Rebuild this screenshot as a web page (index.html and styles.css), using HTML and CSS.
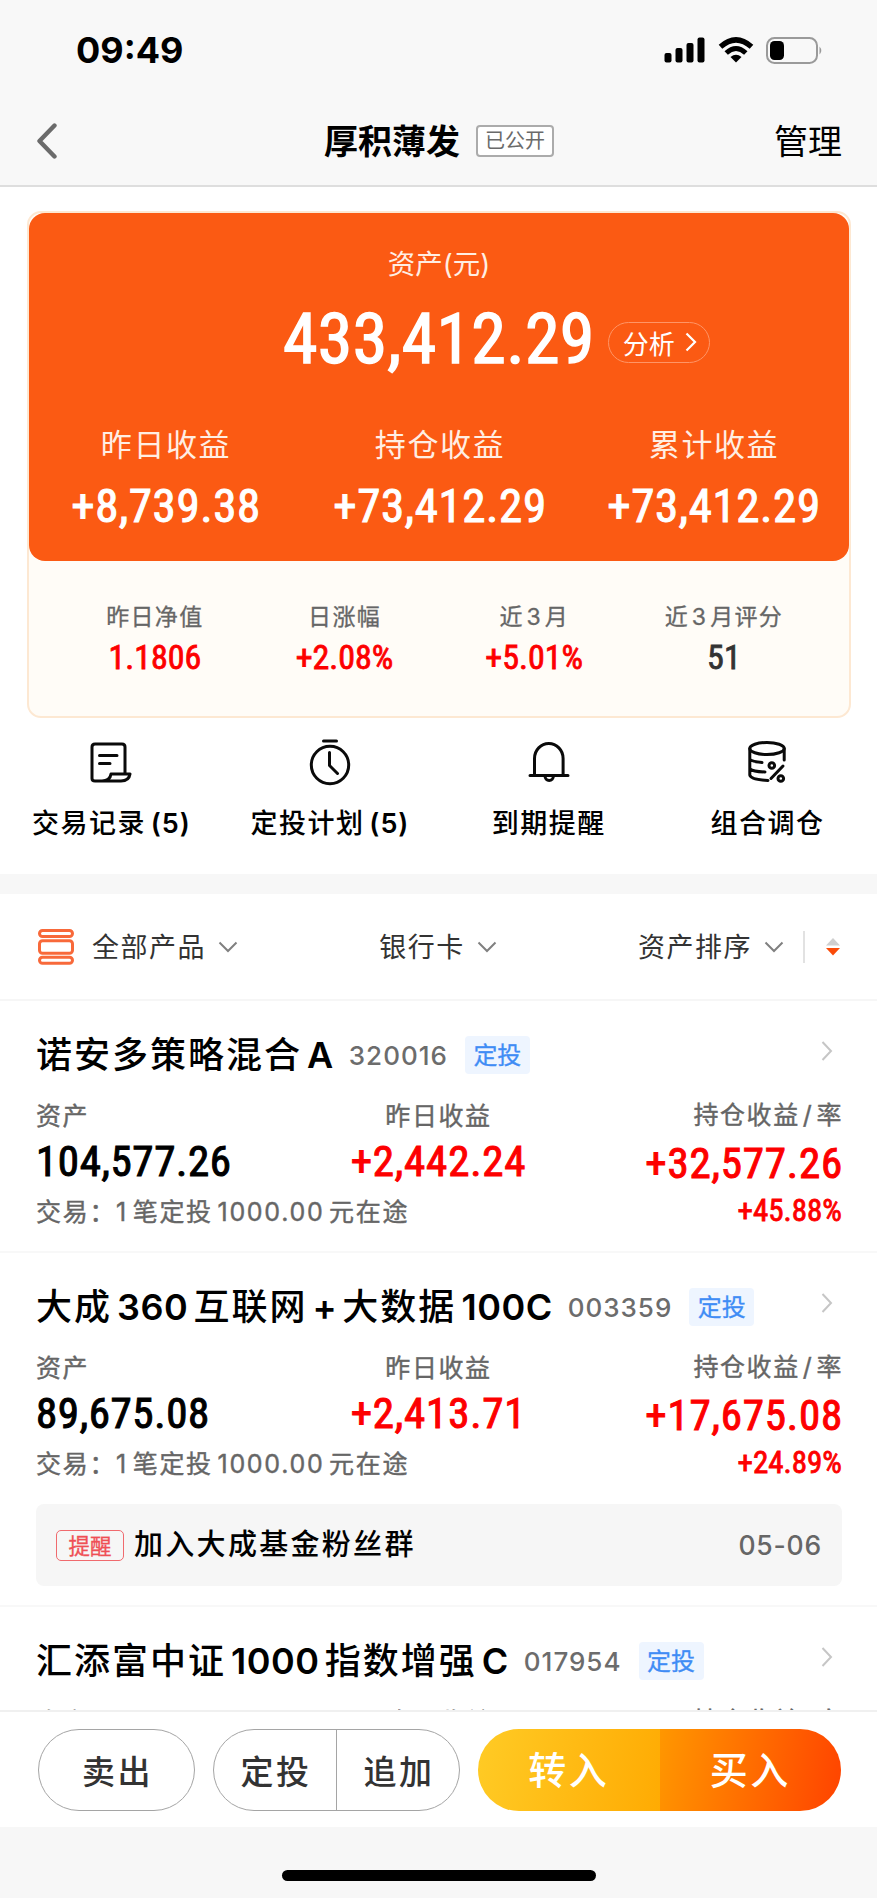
FILE: index.html
```html
<!DOCTYPE html>
<html lang="zh-CN">

<head>
    <meta charset="UTF-8">
    <meta name="viewport" content="width=device-width, initial-scale=1.0">
    <title>厚积薄发</title>
    <link rel="stylesheet" href="styles.css">
</head>

<body>
    <div class="app">
        <!-- Status bar -->
        <div class="status">
            <span class="time">09:49</span>
            <div class="status-icons">
                <svg width="42" height="26" viewBox="0 0 42 26">
                    <rect x="0.5" y="16" width="7" height="9.5" rx="2" />
                    <rect x="11.5" y="11" width="7" height="14.5" rx="2" />
                    <rect x="22.5" y="6" width="7" height="19.5" rx="2" />
                    <rect x="33.5" y="0.5" width="7" height="25" rx="2" />
                </svg>
                <svg width="36" height="26" viewBox="0 0 36 26">
                    <path d="M2.5 9.8 Q18 -4 33.5 9.8" fill="none" stroke="#000" stroke-width="5.4" />
                    <path d="M8.2 16 Q18 7 27.8 16" fill="none" stroke="#000" stroke-width="5" />
                    <path d="M18 25.5 L12.5 20 Q18 15.5 23.5 20 Z" />
                </svg>
                <svg width="57" height="27" viewBox="0 0 57 27">
                    <rect x="1" y="1" width="50" height="25" rx="7.5" fill="none" stroke="#9a9a9a" stroke-width="2" />
                    <rect x="4" y="4" width="14" height="19" rx="4.5" />
                    <path d="M53.5 9.5 Q57 13.5 53.5 17.5 Z" fill="#9a9a9a" />
                </svg>
            </div>
        </div>

        <!-- Nav bar -->
        <div class="nav">
            <svg class="back" width="22" height="36" viewBox="0 0 22 36">
                <path d="M18.5 2.5 L3.5 18 L18.5 33.5" fill="none" stroke="#6b6b6b" stroke-width="4.4" stroke-linecap="round" stroke-linejoin="round" />
            </svg>
            <div class="nav-title">
                <h1>厚积薄发</h1>
                <span class="public">已公开</span>
            </div>
            <span class="manage">管理</span>
        </div>

        <!-- Asset card -->
        <div class="card">
            <div class="asset">
                <div class="asset-label">资产(元)</div>
                <div class="asset-total">
                    <span class="num total">433,412.29</span>
                    <span class="analyse">分析
                        <svg width="12" height="20" viewBox="0 0 12 20">
                            <path d="M1.5 1.5 L10 10 L1.5 18.5" fill="none" stroke="#fff" stroke-width="2.2" />
                        </svg>
                    </span>
                </div>
                <div class="income">
                    <div>
                        <p>昨日收益</p>
                        <span class="num">+8,739.38</span>
                    </div>
                    <div>
                        <p>持仓收益</p>
                        <span class="num">+73,412.29</span>
                    </div>
                    <div>
                        <p>累计收益</p>
                        <span class="num">+73,412.29</span>
                    </div>
                </div>
            </div>
            <div class="stats">
                <div>
                    <p>昨日净值</p>
                    <span class="num red">1.1806</span>
                </div>
                <div>
                    <p>日涨幅</p>
                    <span class="num red">+2.08%</span>
                </div>
                <div>
                    <p>近 3 月</p>
                    <span class="num red">+5.01%</span>
                </div>
                <div>
                    <p>近 3 月评分</p>
                    <span class="num">51</span>
                </div>
            </div>
        </div>

        <!-- Actions -->
        <div class="actions">
            <div class="action">
                <svg width="48" height="48" viewBox="0 0 48 48">
                    <path d="M38 35 V8 Q38 5 35 5 H8 Q5 5 5 8 V39.5 Q5 42 8 42 H34 Q42 42 43 35 H24 Q23 42 15 42" />
                    <path d="M12.5 16.5 H30 M12.5 24.5 H23" />
                </svg>
                <span>交易记录 <b>(5)</b></span>
            </div>
            <div class="action">
                <svg width="48" height="48" viewBox="0 0 48 48">
                    <circle cx="24" cy="26" r="18.7" />
                    <path d="M17.5 2 H30.5 M23.5 13.5 V26.5 L31.5 34.5" />
                </svg>
                <span>定投计划 <b>(5)</b></span>
            </div>
            <div class="action">
                <svg width="48" height="48" viewBox="0 0 48 48">
                    <path d="M9.5 36.5 V19.5 A14.3 15 0 0 1 38.1 19.5 V36.5 M5 36.5 H43" />
                    <path d="M20 37 A4.2 4.5 0 0 0 28.4 37" />
                </svg>
                <span>到期提醒</span>
            </div>
            <div class="action">
                <svg width="48" height="48" viewBox="0 0 48 48">
                    <ellipse cx="24" cy="9.5" rx="17.2" ry="6" />
                    <path d="M41.2 9.5 V21 M6.8 9.5 V36 Q7.5 40.5 25 41.5 M7 20.5 Q9 22.5 19 23.5 M7 30 Q10 32.5 22 33" />
                    <circle cx="28.8" cy="26.5" r="2.8" />
                    <circle cx="37.8" cy="39.5" r="2.8" />
                    <path d="M40 27 L28 39.5" />
                </svg>
                <span>组合调仓</span>
            </div>
        </div>

        <!-- Filter -->
        <div class="filter">
            <div class="filter-item">
                <svg class="list-icon" width="36" height="36" viewBox="0 0 36 36">
                    <rect x="1.5" y="1.5" width="33" height="6" rx="3" />
                    <rect x="1.5" y="11.7" width="33" height="12.5" rx="3" />
                    <rect x="1.5" y="28.3" width="33" height="6" rx="3" />
                </svg>
                <span>全部产品</span>
                <svg class="down" width="20" height="12" viewBox="0 0 20 12"><path d="M1.5 1.5 L10 10 L18.5 1.5" /></svg>
            </div>
            <div class="filter-item">
                <span>银行卡</span>
                <svg class="down" width="20" height="12" viewBox="0 0 20 12"><path d="M1.5 1.5 L10 10 L18.5 1.5" /></svg>
            </div>
            <div class="filter-item">
                <span>资产排序</span>
                <svg class="down" width="20" height="12" viewBox="0 0 20 12"><path d="M1.5 1.5 L10 10 L18.5 1.5" /></svg>
                <svg class="sort" width="14" height="18" viewBox="0 0 14 18">
                    <path d="M7 0 L14 7.5 H0 Z" fill="#cfcfcf" />
                    <path d="M0 10 H14 L7 17.5 Z" fill="#fb4b08" />
                </svg>
            </div>
        </div>

        <!-- Fund list -->
        <div class="funds">
            <div class="fund">
                <div class="fund-head">
                    <h2>诺安多策略混合 <b>A</b></h2>
                    <span class="code">320016</span>
                    <span class="tag">定投</span>
                    <svg class="go" width="12" height="20" viewBox="0 0 12 20"><path d="M1.5 1 L10 10 L1.5 19" /></svg>
                </div>
                <div class="fund-data">
                    <div>
                        <p>资产</p>
                        <span class="num">104,577.26</span>
                    </div>
                    <div class="mid">
                        <p>昨日收益</p>
                        <span class="num red">+2,442.24</span>
                    </div>
                    <div class="right">
                        <p>持仓收益<i>/</i>率</p>
                        <span class="num red">+32,577.26</span>
                    </div>
                </div>
                <div class="fund-foot">
                    <span>交易：1 笔定投 1000.00 元在途</span>
                    <span class="num red">+45.88%</span>
                </div>
            </div>

            <div class="fund">
                <div class="fund-head">
                    <h2>大成 <b>360</b> 互联网 <b>+</b> 大数据 <b>100C</b></h2>
                    <span class="code">003359</span>
                    <span class="tag">定投</span>
                    <svg class="go" width="12" height="20" viewBox="0 0 12 20"><path d="M1.5 1 L10 10 L1.5 19" /></svg>
                </div>
                <div class="fund-data">
                    <div>
                        <p>资产</p>
                        <span class="num">89,675.08</span>
                    </div>
                    <div class="mid">
                        <p>昨日收益</p>
                        <span class="num red">+2,413.71</span>
                    </div>
                    <div class="right">
                        <p>持仓收益<i>/</i>率</p>
                        <span class="num red">+17,675.08</span>
                    </div>
                </div>
                <div class="fund-foot">
                    <span>交易：1 笔定投 1000.00 元在途</span>
                    <span class="num red">+24.89%</span>
                </div>
                <div class="notice">
                    <span class="notice-tag">提醒</span>
                    <span class="notice-text">加入大成基金粉丝群</span>
                    <span class="date">05-06</span>
                </div>
            </div>

            <div class="fund">
                <div class="fund-head">
                    <h2>汇添富中证 <b>1000</b> 指数增强 <b>C</b></h2>
                    <span class="code">017954</span>
                    <span class="tag">定投</span>
                    <svg class="go" width="12" height="20" viewBox="0 0 12 20"><path d="M1.5 1 L10 10 L1.5 19" /></svg>
                </div>
                <div class="fund-data">
                    <div>
                        <p>资产</p>
                    </div>
                    <div class="mid">
                        <p>昨日收益</p>
                    </div>
                    <div class="right">
                        <p>持仓收益<i>/</i>率</p>
                    </div>
                </div>
            </div>
        </div>

        <!-- Bottom buttons -->
        <div class="bottom">
            <button class="sell">卖出</button>
            <div class="group">
                <button>定投</button>
                <button>追加</button>
            </div>
            <div class="group main">
                <button class="in">转入</button>
                <button class="buy">买入</button>
            </div>
        </div>
        <div class="home">
            <div class="home-bar"></div>
        </div>
    </div>
</body>

</html>
```
FILE: styles.css
```css
* {
    box-sizing: border-box;
}

body {
    margin: 0;
    background-color: #fff;
    color: #000;
    font-family: Inter, "Noto Sans CJK SC", sans-serif;
}

h1, h2, p {
    margin: 0;
}

.app {
    width: 877px;
    height: 1898px;
    display: flex;
    flex-direction: column;
    overflow: hidden;
}

.num {
    font-family: "Roboto Condensed", Roboto, "Noto Sans CJK SC", sans-serif;
    font-stretch: 75%;
    font-weight: 400;
    -webkit-text-stroke: 0.8px currentColor;
    white-space: nowrap;
}

.red {
    color: #fd0000;
}

/* status bar */
.status {
    height: 100px;
    background-color: #f8f8f8;
    display: flex;
    justify-content: space-between;
    padding: 30px 54px 0 76px;
}

.time {
    font-size: 36px;
    line-height: 40px;
    font-weight: 700;
}

.status-icons {
    display: flex;
    align-items: center;
    gap: 12px;
    height: 40px;
}

/* nav */
.nav {
    height: 87px;
    background-color: #f8f8f8;
    border-bottom: 2px solid #dedede;
    display: grid;
    grid-template-columns: 1fr auto 1fr;
    align-items: center;
    padding: 0 35px 3px 36px;
}

.nav-title {
    display: flex;
    align-items: center;
    gap: 16px;
}

.nav h1 {
    font-size: 34px;
    line-height: 40px;
    font-weight: 700;
    padding-top: 2px;
}

.public {
    width: 78px;
    height: 32px;
    border: 2px solid #ababab;
    border-radius: 4px;
    background-color: #fff;
    color: #6a6a6a;
    font-size: 20px;
    line-height: 29px;
    text-align: center;
}

.manage {
    font-size: 34px;
    line-height: 40px;
    padding-top: 1px;
    text-align: right;
}

/* card */
.card {
    margin: 24px 26px 0 27px;
    height: 507px;
    border: 2px solid #fde8d2;
    border-radius: 14px;
    background-color: #fffcf7;
}

.asset {
    height: 348px;
    border-radius: 16px;
    background-color: #fb5a13;
    color: #fff;
    padding-top: 35px;
}

.asset-label {
    font-size: 27.5px;
    line-height: 32px;
    text-align: center;
    color: #ffeee3;
}

.asset-total {
    display: flex;
    align-items: center;
    padding-left: 254px;
    margin-top: 19px;
}

.total {
    font-size: 70px;
    line-height: 80px;
    letter-spacing: 0.3px;
    -webkit-text-stroke-width: 1.4px;
}

.analyse {
    display: flex;
    align-items: center;
    gap: 10px;
    width: 102px;
    height: 41px;
    margin: 6px 0 0 13px;
    padding-left: 14px;
    border: 1px solid #ff9566;
    border-radius: 21px;
    font-size: 26px;
}

.income {
    display: grid;
    grid-template-columns: repeat(3, 274px);
    text-align: center;
    margin-top: 46px;
}

.income p {
    font-size: 31px;
    line-height: 40px;
    letter-spacing: 1.6px;
    color: #ffeee3;
}

.income .num {
    display: block;
    font-size: 47px;
    line-height: 56px;
    letter-spacing: 0.6px;
    margin-top: 13px;
    -webkit-text-stroke-width: 1px;
}

.stats {
    display: grid;
    grid-template-columns: repeat(4, 189.7px);
    text-align: center;
    padding: 42px 0 0 31px;
}

.stats p {
    font-size: 23px;
    line-height: 28px;
    letter-spacing: 1.3px;
    word-spacing: -5px;
    color: #666;
    -webkit-text-stroke: 0.3px currentColor;
}

.stats .num {
    display: block;
    font-size: 34px;
    line-height: 40px;
    margin-top: 6px;
}

.stats .num:not(.red) {
    color: #333;
}

/* actions */
.actions {
    display: grid;
    grid-template-columns: repeat(4, 218.7px);
    height: 176px;
    padding: 21px 0 0 2px;
    border-bottom: 20px solid #f7f7f7;
}

.action {
    display: flex;
    flex-direction: column;
    align-items: center;
    font-size: 27px;
    line-height: 36px;
    letter-spacing: 1.5px;
    word-spacing: -4px;
    font-weight: 500;
}

.action span {
    margin-top: 19px;
}

.action b {
    font-weight: 600;
    letter-spacing: 1px;
}

.action svg {
    fill: none;
    stroke: #0a0a0a;
    stroke-width: 3;
    stroke-linecap: round;
    stroke-linejoin: round;
}

/* filter */
.filter {
    height: 107px;
    border-bottom: 2px solid #f6f6f6;
    display: flex;
    align-items: center;
    justify-content: space-between;
    padding: 0 37px 0 38px;
}

.filter-item {
    display: flex;
    align-items: center;
    font-size: 27px;
    line-height: 36px;
    letter-spacing: 1.5px;
    color: #333;
}

.filter-item span {
    padding-top: 3px;
}

.list-icon {
    margin-right: 18px;
    fill: none;
    stroke: #f8693a;
    stroke-width: 3;
}

.down {
    margin-left: 12px;
    fill: none;
    stroke: #808080;
    stroke-width: 2;
}

.sort {
    box-sizing: content-box;
    margin-left: 19px;
    padding: 7px 0 7px 21px;
    border-left: 2px solid #e2e2e2;
}

/* funds */
.funds {
    flex: 1;
    min-height: 0;
    overflow: hidden;
}

.fund {
    padding: 34px 36px 24px;
    border-bottom: 2px solid #f8f8f8;
}

.fund-head {
    display: flex;
    align-items: center;
    height: 40px;
    white-space: nowrap;
}

.fund h2 {
    font-size: 36px;
    line-height: 40px;
    letter-spacing: 2px;
    word-spacing: -6.5px;
    font-weight: 500;
}

.fund h2 b {
    font-weight: 600;
    letter-spacing: 0.5px;
}

.code {
    margin-left: 15px;
    font-size: 26px;
    font-weight: 500;
    letter-spacing: 1px;
    color: #6c6c6c;
}

.tag {
    width: 65px;
    height: 38px;
    margin-left: 17px;
    border-radius: 4px;
    background-color: #eef5ff;
    color: #3f8cf5;
    font-size: 24px;
    line-height: 39px;
    text-align: center;
    -webkit-text-stroke: 0.3px currentColor;
}

.go {
    margin: 0 8px 8px auto;
    fill: none;
    stroke: #c6c6c6;
    stroke-width: 2;
}

.fund-data {
    display: grid;
    grid-template-columns: 1fr auto 1fr;
    margin-top: 27px;
}

.fund-data p {
    font-size: 25px;
    line-height: 28px;
    letter-spacing: 1.6px;
    color: #666;
    -webkit-text-stroke: 0.4px currentColor;
}

.fund-data i {
    font-style: normal;
    margin: 0 3px;
}

.fund-data .num {
    display: block;
    font-size: 43px;
    line-height: 40px;
    letter-spacing: 0.6px;
    margin-top: 11px;
    -webkit-text-stroke-width: 1px;
}

.fund-data .num.red {
    letter-spacing: 0.8px;
}

.mid {
    text-align: center;
}

.right {
    text-align: right;
    margin-right: -2px;
}

.right p {
    position: relative;
    top: -1px;
}

.right .num {
    margin-top: 13px;
}

.fund-foot {
    display: flex;
    justify-content: space-between;
    height: 30px;
    margin: 14px -1px 0 0;
    font-size: 25px;
    line-height: 30px;
    letter-spacing: 1.7px;
    word-spacing: -4px;
    color: #666;
    -webkit-text-stroke: 0.4px currentColor;
}

.fund-foot .num {
    font-size: 31px;
    line-height: 28px;
    letter-spacing: 0;
}

.notice {
    display: flex;
    align-items: center;
    height: 82px;
    margin: 25px -1px -5px 0;
    padding: 0 20px;
    border-radius: 8px;
    background-color: #f6f6f6;
}

.notice-tag {
    width: 68px;
    height: 31px;
    border: 1px solid #f06a6e;
    border-radius: 5px;
    color: #ef4f55;
    font-size: 21.5px;
    line-height: 30px;
    text-align: center;
    -webkit-text-stroke: 0.3px currentColor;
}

.notice-text {
    margin-left: 10px;
    font-size: 29px;
    line-height: 36px;
    letter-spacing: 2.3px;
    font-weight: 500;
}

.date {
    margin-left: auto;
    font-size: 26.5px;
    font-weight: 500;
    letter-spacing: 0.8px;
    color: #666;
}

/* bottom */
.bottom {
    display: flex;
    height: 117px;
    padding: 17px 36px 0 38px;
    border-top: 2px solid #f0f0f0;
}

.bottom button {
    border: 0;
    padding: 0 0 0 2px;
    background: none;
    font-family: inherit;
    font-size: 33px;
    letter-spacing: 2.5px;
    font-weight: 500;
    color: #333;
    height: 100%;
}

.bottom .sell,
.group {
    height: 82px;
    border: 1px solid #a5a5a5;
    border-radius: 41px;
}

.bottom .sell {
    width: 157px;
}

.group {
    display: flex;
    width: 247px;
    margin-left: 18px;
    overflow: hidden;
}

.group button {
    flex: 1;
}

.group button + button {
    border-left: 1px solid #a5a5a5;
}

.group.main {
    width: 363px;
    border: 0;
}

.group.main button {
    color: #fff;
    font-size: 38px;
    border: 0;
    padding: 0 0 5px;
}

.group.main .in {
    background: linear-gradient(100deg, #ffcb25, #ffab03);
}

.group.main .buy {
    background: linear-gradient(100deg, #ff9700, #ff4300);
}

.home {
    height: 71px;
    background-color: #f7f7f7;
    padding-top: 43px;
}

.home-bar {
    width: 314px;
    height: 11px;
    margin: 0 auto;
    border-radius: 6px;
    background-color: #000;
}
```
